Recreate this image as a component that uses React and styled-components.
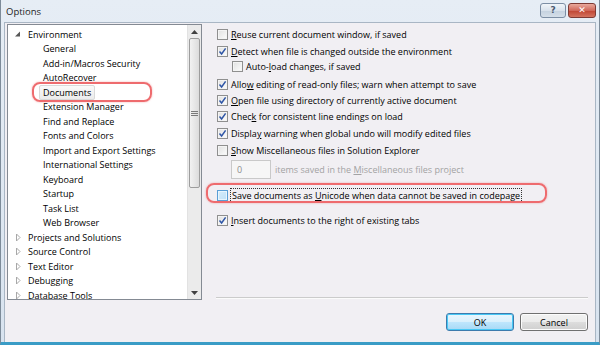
import React from 'react'
import styled, { createGlobalStyle } from 'styled-components'

const Global = createGlobalStyle`
  body {
    margin: 0;
    background: #fff;
    font-family: "Open Sans", "Noto Sans", sans-serif;
    font-size: 9px;
    color: #000;
  }
`

const Window = styled.div`
  width: 600px;
  height: 345px;
  box-sizing: border-box;
  display: flex;
  flex-direction: column;
  background: linear-gradient(#e6edf5, #d8e3ef);
  border-left: 1px solid #7d8b99;
  border-right: 1px solid #7d8b99;
  border-bottom: 3px solid #3a9cc6;
  padding: 0 3px;
`

const TitleBar = styled.div`
  height: 22px;
  display: flex;
  align-items: center;
  padding-left: 2px;
  font-size: 9.5px;
  color: #1e1e1e;
`

const TitleText = styled.span`
  flex: 1;
`

const CaptionBtn = styled.div`
  width: ${p => p.w}px;
  height: 13px;
  margin-top: -2px;
  margin-left: 2px;
  border: 1px solid ${p => p.close ? '#7d3a34' : '#7c8ea4'};
  border-radius: 3px;
  background: ${p => p.close
    ? 'linear-gradient(#e9a99c, #d0685a 50%, #bf4432 51%, #d4735f)'
    : 'linear-gradient(#f1f5f9, #d9e2ec 50%, #c4d1df 51%, #d5dfe9)'};
  display: flex;
  align-items: center;
  justify-content: center;
  color: ${p => p.close ? '#fff' : '#4a5a70'};
  font-family: "DejaVu Sans", sans-serif;
  font-weight: bold;
  font-size: 9px;
  line-height: 1;
`

const Client = styled.div`
  flex: 1;
  display: flex;
  flex-direction: column;
  background: #f1eff3;
  border: 1px solid #a9b6c4;
  border-bottom: none;
  padding: 1px 7px 0 2px;
`

const Main = styled.div`
  display: flex;
  height: 276px;
`

const TreePanel = styled.div`
  width: 195px;
  box-sizing: border-box;
  border: 1px solid #848a93;
  background: #fff;
  display: flex;
  overflow: hidden;
`

const TreeList = styled.div`
  flex: 1;
  padding-top: 2px;
  overflow: hidden;
`

const TreeRow = styled.div`
  height: 14.5px;
  display: flex;
  align-items: center;
  padding-left: ${p => p.level ? 31 : 5}px;
  position: relative;
  white-space: nowrap;
`

const Expander = styled.svg`
  width: 11px;
  height: 9px;
  flex: none;
`

const TreeLabel = styled.span`
  padding: 0 3px;
  line-height: 13px;
  border: 1px solid ${p => p.selected ? '#d9d9d9' : 'transparent'};
  border-radius: 2px;
  background: ${p => p.selected ? 'linear-gradient(#fafafa, #ececec)' : 'transparent'};
`

const Ring = styled.div`
  position: absolute;
  left: ${p => p.left}px;
  top: ${p => p.top}px;
  width: ${p => p.w}px;
  height: ${p => p.h}px;
  border: 2px solid #ee6b6e;
  border-radius: 8px;
  box-shadow: 0 0 2px rgba(238, 107, 110, 0.6);
  pointer-events: none;
`

const ScrollBar = styled.div`
  width: 13px;
  flex: none;
  display: flex;
  flex-direction: column;
  background: #ebebeb;
  border-left: 1px solid #e2e2e2;
`

const ScrollArrow = styled.div`
  height: 13px;
  display: flex;
  align-items: center;
  justify-content: center;
`

const Thumb = styled.div`
  height: 148px;
  margin: 0 1px;
  border: 1px solid #9d9d9d;
  border-radius: 2px;
  background: linear-gradient(90deg, #f2f2f2, #dcdcdc);
  display: flex;
  align-items: center;
  justify-content: center;
`

const Track = styled.div`
  flex: 1;
`

const RightPane = styled.div`
  flex: 1;
  display: flex;
  flex-direction: column;
  padding: 3px 0 0 15px;
`

const OptionRow = styled.div`
  height: 14px;
  margin-top: ${p => p.mt || 0}px;
  margin-left: ${p => p.indent || 0}px;
  display: flex;
  align-items: center;
  gap: 3px;
  position: relative;
  white-space: nowrap;
`

const Box = styled.div`
  width: 11px;
  height: 11px;
  box-sizing: border-box;
  flex: none;
  border: 1px solid ${p => p.hot ? '#5a9ed6' : '#8f8f8f'};
  background: ${p => p.hot
    ? 'linear-gradient(135deg, #d6ecfa, #bfe0f7)'
    : 'linear-gradient(135deg, #e0e0e0, #fdfdfd)'};
  box-shadow: inset 0 0 0 1px ${p => p.hot ? '#e8f5fd' : '#f4f4f4'};
  display: flex;
  align-items: center;
  justify-content: center;
`

const Focus = styled.span`
  outline: 1px dotted #333;
  outline-offset: 0;
  padding: 0 1px;
`

const CountRow = styled.div`
  margin: 3px 0 0 14px;
  display: flex;
  align-items: center;
  gap: 4px;
  color: #a3a3a3;
  white-space: nowrap;
`

const CountBox = styled.div`
  width: 40px;
  height: 19px;
  box-sizing: border-box;
  border: 1px solid #c9c9c9;
  background: #f6f6f6;
  padding-left: 5px;
  display: flex;
  align-items: center;
  color: #8d8d8d;
`

const Separator = styled.div`
  margin-top: auto;
  margin-bottom: 1px;
  margin-left: -1px;
  height: 1px;
  background: #cbcbcb;
  border-bottom: 1px solid #fbfbfb;
`

const ButtonRow = styled.div`
  margin-top: 13px;
  display: flex;
  justify-content: flex-end;
  gap: 6px;
`

const Button = styled.div`
  width: 68px;
  height: 18px;
  box-sizing: border-box;
  border: 1px solid ${p => p.primary ? '#3d7bad' : '#707070'};
  border-radius: 3px;
  background: ${p => p.primary
    ? 'linear-gradient(#eaf6fd, #d9f0fc 50%, #bee6fd 51%, #a7d9f5)'
    : 'linear-gradient(#f2f2f2, #ebebeb 50%, #dddddd 51%, #cfcfcf)'};
  box-shadow: inset 0 0 0 1px ${p => p.primary ? '#48c8f5' : '#fcfcfc'};
  display: flex;
  align-items: center;
  justify-content: center;
`

const Check = () => (
  <svg width="9" height="9" viewBox="0 0 9 9">
    <path d="M1.5 4.6 L3.6 7 L7.6 1.4" fill="none" stroke="#2e55a6" strokeWidth="1.5" />
  </svg>
)

const Open = () => (
  <Expander viewBox="0 0 11 9">
    <polygon points="7,1.5 7,6.5 2,6.5" fill="#575757" />
  </Expander>
)

const Closed = () => (
  <Expander viewBox="0 0 11 9">
    <polygon points="3.5,1 7,4.5 3.5,8" fill="none" stroke="#a8a8a8" strokeWidth="1" />
  </Expander>
)

const children = [
  'General', 'Add-in/Macros Security', 'AutoRecover', 'Documents', 'Extension Manager',
  'Find and Replace', 'Fonts and Colors', 'Import and Export Settings',
  'International Settings', 'Keyboard', 'Startup', 'Task List', 'Web Browser',
]
const roots = ['Projects and Solutions', 'Source Control', 'Text Editor', 'Debugging', 'Database Tools']

function Option({ checked, hot, mt, indent, children }) {
  return (
    <OptionRow mt={mt} indent={indent}>
      <Box hot={hot}>{checked && <Check />}</Box>
      <span>{children}</span>
    </OptionRow>
  )
}

export default function App() {
  return (
    <>
      <Global />
      <Window>
        <TitleBar>
          <TitleText>Options</TitleText>
          <CaptionBtn w={24}>?</CaptionBtn>
          <CaptionBtn w={26} close>✕</CaptionBtn>
        </TitleBar>
        <Client>
          <Main>
            <TreePanel>
              <TreeList>
                <TreeRow><Open /><TreeLabel>Environment</TreeLabel></TreeRow>
                {children.map(c => (
                  <TreeRow level={1} key={c}>
                    {c === 'Documents' && <Ring left={24} top={-3} w={116} h={16} />}
                    <TreeLabel selected={c === 'Documents'}>{c}</TreeLabel>
                  </TreeRow>
                ))}
                {roots.map(r => (
                  <TreeRow key={r}><Closed /><TreeLabel>{r}</TreeLabel></TreeRow>
                ))}
              </TreeList>
              <ScrollBar>
                <ScrollArrow>
                  <svg width="7" height="4" viewBox="0 0 7 4"><polygon points="0,4 7,4 3.5,0" fill="#404040" /></svg>
                </ScrollArrow>
                <Thumb>
                  <svg width="7" height="5" viewBox="0 0 7 5">
                    <path d="M0 0.5H7M0 2.5H7M0 4.5H7" stroke="#7a7a7a" strokeWidth="1" />
                  </svg>
                </Thumb>
                <Track />
                <ScrollArrow>
                  <svg width="7" height="4" viewBox="0 0 7 4"><polygon points="0,0 7,0 3.5,4" fill="#404040" /></svg>
                </ScrollArrow>
              </ScrollBar>
            </TreePanel>
            <RightPane>
              <Option><u>R</u>euse current document window, if saved</Option>
              <Option checked mt={3}><u>D</u>etect when file is changed outside the environment</Option>
              <Option indent={15} mt={1}>Auto-<u>l</u>oad changes, if saved</Option>
              <Option checked mt={4}>Allo<u>w</u> editing of read-only files; warn when attempt to save</Option>
              <Option checked mt={2}><u>O</u>pen file using directory of currently active document</Option>
              <Option checked mt={2}>Chec<u>k</u> for consistent line endings on load</Option>
              <Option checked mt={3}>Displa<u>y</u> warning when global undo will modify edited files</Option>
              <Option mt={3}><u>S</u>how Miscellaneous files in Solution Explorer</Option>
              <CountRow>
                <CountBox>0</CountBox>
                <span>items saved in the <u>M</u>iscellaneous files project</span>
              </CountRow>
              <OptionRow mt={9}>
                <Ring left={-11} top={-5} w={337} h={16} />
                <Box hot />
                <Focus>Save documents as <u>U</u>nicode when data cannot be saved in codepage</Focus>
              </OptionRow>
              <Option checked mt={11}><u>I</u>nsert documents to the right of existing tabs</Option>
              <Separator />
            </RightPane>
          </Main>
          <ButtonRow>
            <Button primary>OK</Button>
            <Button>Cancel</Button>
          </ButtonRow>
        </Client>
      </Window>
    </>
  )
}
